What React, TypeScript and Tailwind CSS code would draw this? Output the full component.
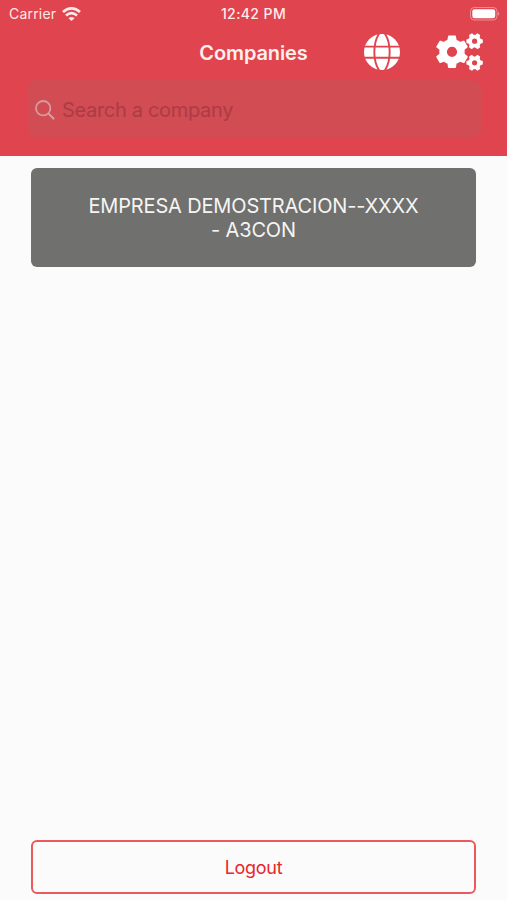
import React from 'react';

const COMPANIES = [{ id: 1, name: 'EMPRESA DEMOSTRACION--XXXX - A3CON' }];

interface GearProps {
  cx: number;
  cy: number;
  outer: number;
  body: number;
  hole: number;
  tooth: number;
  offset: number;
}

// Six-toothed gear; offset rotates the teeth, in degrees
const Gear: React.FC<GearProps> = ({ cx, cy, outer, body, hole, tooth, offset }) => (
  <g transform={`translate(${cx} ${cy})`}>
    <circle r={(body + hole) / 2} fill="none" stroke="currentColor" strokeWidth={body - hole} />
    {[0, 60, 120, 180, 240, 300].map((angle) => (
      <path
        key={angle}
        transform={`rotate(${angle + offset})`}
        d={`M${-tooth - 0.6} ${-body + 1.2}L${-tooth} ${-outer + 0.8}Q${-tooth} ${-outer} ${-tooth + 0.8} ${-outer}H${tooth - 0.8}Q${tooth} ${-outer} ${tooth} ${-outer + 0.8}L${tooth + 0.6} ${-body + 1.2}Z`}
        fill="currentColor"
      />
    ))}
  </g>
);

const GearsIcon = () => (
  <svg className="block h-[38px] w-12" viewBox="0 0 48 38">
    <Gear cx={16} cy={18.8} outer={16.2} body={12.7} hole={5.1} tooth={4} offset={0} />
    <Gear cx={38.6} cy={8.2} outer={8.2} body={6.4} hole={2.6} tooth={2} offset={30} />
    <Gear cx={38.6} cy={29.8} outer={8.2} body={6.4} hole={2.6} tooth={2} offset={30} />
  </svg>
);

const GlobeIcon = () => (
  <svg className="block size-9" viewBox="0 0 36 36">
    <circle cx="18" cy="18" r="18" fill="currentColor" />
    <g fill="none" stroke="#e0444e" strokeWidth="1.9">
      <path d="M0 12.6H36M0 23.7H36" />
      <path d="M15.5 -1C8.6 9 8.6 27 15.5 37M20.5 -1C27.4 9 27.4 27 20.5 37" />
    </g>
  </svg>
);

const WifiIcon = () => (
  <svg className="block h-[14px] w-[19px]" viewBox="0 0 19 14" fill="none" stroke="currentColor" strokeWidth="2.7">
    <path d="M1 5.1Q9.5 -2.3 18 5.1" />
    <path d="M4 8.5Q9.5 3.7 15 8.5" />
    <path d="M6.5 11.2Q9.5 8.6 12.5 11.2L9.5 14Z" fill="currentColor" stroke="none" />
  </svg>
);

const BatteryIcon = () => (
  <svg className="block h-[14px] w-[31px]" viewBox="0 0 31 14">
    <rect x="0.5" y="0.5" width="26.5" height="12.5" rx="3.8" fill="none" stroke="#fff" strokeOpacity="0.4" />
    <rect x="2.3" y="2.3" width="22.9" height="8.9" rx="2.2" fill="#fff" />
    <path d="M28.2 4.7Q30.4 6.7 28.2 8.8Z" fill="#fff" fillOpacity="0.5" />
  </svg>
);

const SearchIcon = () => (
  <svg className="block size-5" viewBox="0 0 20 20" fill="none" stroke="currentColor" strokeWidth="1.8">
    <circle cx="8.2" cy="8.2" r="7.2" />
    <path d="M13.4 13.4L19.2 19.2" strokeWidth="2.1" />
  </svg>
);

const StatusBar = () => (
  <div className="grid h-7 grid-cols-3 items-center text-[14px] leading-[18px]">
    <div className="flex items-center gap-[6px] pl-[9px] text-[#ffe9e7]">
      <span className="w-[47px] whitespace-nowrap tracking-[0.2px]">Carrier</span>
      <WifiIcon />
    </div>
    <span className="text-center text-[14px] font-medium tracking-[0.4px] text-[#ffecea]">12:42 PM</span>
    <div className="flex justify-end pr-[6px]">
      <BatteryIcon />
    </div>
  </div>
);

const App: React.FC = () => {
  return (
    <div className="flex h-[900px] w-[507px] flex-col overflow-hidden bg-[#fbfbfb] font-['Inter','Liberation_Sans',sans-serif]">
      <header className="h-[156px] shrink-0 bg-[#e0444e] text-white">
        <StatusBar />
        <div className="grid h-[52px] grid-cols-3 items-center pb-[4px]">
          <h1 className="col-start-2 pt-[2px] text-center text-[20px] font-semibold leading-6 tracking-[-0.12px] text-[#fff0ed]">
            Companies
          </h1>
          <div className="flex items-center justify-end gap-9 pr-[23px]">
            <button aria-label="Language">
              <GlobeIcon />
            </button>
            <button aria-label="Settings">
              <GearsIcon />
            </button>
          </div>
        </div>
        <label className="ml-[27px] mr-[25px] flex h-[57px] items-center gap-[7px] rounded-[10px] bg-[#d14c53] pl-2 pt-[2px] text-[#d99a9c]">
          <SearchIcon />
          <input
            type="text"
            placeholder="Search a company"
            className="h-8 min-w-0 flex-1 bg-transparent text-[20px] tracking-[-0.32px] outline-none placeholder:text-[#ab3c45]"
          />
        </label>
      </header>

      <main className="flex-1 px-[31px] pt-3">
        {COMPANIES.map((company) => (
          <button
            key={company.id}
            className="flex h-[99px] w-full items-center justify-center rounded-md bg-[#70706e] px-[55px] pt-px text-center text-[20px] leading-[24.5px] tracking-[-0.16px] text-[#f5f5f3]"
          >
            {company.name}
          </button>
        ))}
      </main>

      <footer className="px-[31px] pb-[6px]">
        <button className="h-[54px] w-full rounded-md border-2 border-[#ea5a5c] text-[18px] tracking-[-0.3px] text-[#e8262a]">
          Logout
        </button>
      </footer>
    </div>
  );
};

export default App;
